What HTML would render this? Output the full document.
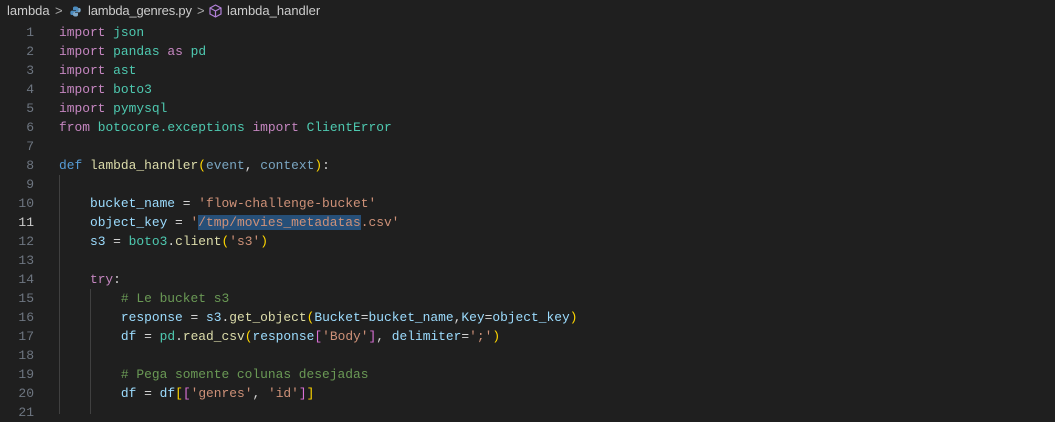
<!DOCTYPE html>
<html><head><style>
body{margin:0;width:1055px;height:414px;background:#1f1f1f;overflow:hidden;font-family:"Liberation Mono",monospace;}
.bc{position:absolute;left:0;top:0;height:22px;width:1055px;font:13px "Liberation Sans",sans-serif;color:#cccccc;line-height:22px;}
.bc span{position:absolute;top:0}
.ln{position:absolute;left:0;width:34px;text-align:right;font-size:13px;color:#6e7681;line-height:19px}
.code{position:absolute;left:59px;font-size:12.9px;line-height:19px;white-space:pre;color:#d4d4d4}
.k{color:#c586c0}.m{color:#4ec9b0}.d{color:#569cd6}.f{color:#dcdcaa}.v{color:#9cdcfe}.p{color:#7aa6c2}.s{color:#ce9178}.c{color:#6a9955}.y{color:#ffd700}.pk{color:#da70d6}.b{color:#179fff}
.sel{background:#264f78}
.g{position:absolute;width:1px;background:#404040}
</style></head><body>
<div class="bc"><span style="left:7px">lambda</span><span style="left:55px;color:#aaa">&gt;</span>
<svg style="position:absolute;left:70px;top:6px" width="11" height="11" viewBox="0 0 11 11"><path d="M5.5 0.5C3 0.5 3 1.5 3 2.5V4H6V4.6H2C0.8 4.6 0.3 5.5 0.3 7S0.8 9 2 9H3V7.5C3 6.5 3.8 6 4.8 6H7C8 6 8.3 5.3 8.3 4.5V2.5C8.3 1.3 7.3 0.5 5.5 0.5Z" fill="#4b8bbe"/><path d="M5.5 10.5C8 10.5 8 9.5 8 8.5V7H5V6.4H9C10.2 6.4 10.7 5.5 10.7 4S10.2 2 9 2H8.3V4.5C8.3 5.5 7.5 6 6.5 6H4.5C3.5 6 3 6.7 3 7.5V8.5C3 9.7 3.7 10.5 5.5 10.5Z" fill="#7fa9c9"/></svg>
<span style="left:88px;letter-spacing:-0.2px">lambda_genres.py</span><span style="left:197px;color:#aaa">&gt;</span>
<svg style="position:absolute;left:209px;top:4px" width="13" height="14" viewBox="0 0 13 14"><path d="M6.5 1L12 4V10L6.5 13L1 10V4Z M1 4L6.5 7L12 4 M6.5 7V13" fill="none" stroke="#b180d7" stroke-width="1.2"/></svg>
<span style="left:227px">lambda_handler</span></div>
<div class="g" style="left:59px;top:175px;height:239px"></div>
<div class="g" style="left:90px;top:289px;height:125px"></div>
<div class="ln" style="top:23px">1<br>2<br>3<br>4<br>5<br>6<br>7<br>8<br>9<br>10<br><span style="color:#cccccc">11</span><br>12<br>13<br>14<br>15<br>16<br>17<br>18<br>19<br>20<br>21</div>
<div class="code" style="top:23px"><span class="k">import</span> <span class="m">json</span>
<span class="k">import</span> <span class="m">pandas</span> <span class="k">as</span> <span class="m">pd</span>
<span class="k">import</span> <span class="m">ast</span>
<span class="k">import</span> <span class="m">boto3</span>
<span class="k">import</span> <span class="m">pymysql</span>
<span class="k">from</span> <span class="m">botocore.exceptions</span> <span class="k">import</span> <span class="m">ClientError</span>

<span class="d">def</span> <span class="f">lambda_handler</span><span class="y">(</span><span class="p">event</span>, <span class="p">context</span><span class="y">)</span>:

    <span class="v">bucket_name</span> = <span class="s">'flow-challenge-bucket'</span>
    <span class="v">object_key</span> = <span class="s">'<span class="sel">/tmp/movies_metadatas</span>.csv'</span>
    <span class="v">s3</span> = <span class="m">boto3</span>.<span class="f">client</span><span class="y">(</span><span class="s">'s3'</span><span class="y">)</span>

    <span class="k">try</span>:
        <span class="c"># Le bucket s3</span>
        <span class="v">response</span> = <span class="v">s3</span>.<span class="f">get_object</span><span class="y">(</span><span class="v">Bucket</span>=<span class="v">bucket_name</span>,<span class="v">Key</span>=<span class="v">object_key</span><span class="y">)</span>
        <span class="v">df</span> = <span class="m">pd</span>.<span class="f">read_csv</span><span class="y">(</span><span class="v">response</span><span class="pk">[</span><span class="s">'Body'</span><span class="pk">]</span>, <span class="v">delimiter</span>=<span class="s">';'</span><span class="y">)</span>

        <span class="c"># Pega somente colunas desejadas</span>
        <span class="v">df</span> = <span class="v">df</span><span class="y">[</span><span class="pk">[</span><span class="s">'genres'</span>, <span class="s">'id'</span><span class="pk">]</span><span class="y">]</span>
</div>
</body></html>
